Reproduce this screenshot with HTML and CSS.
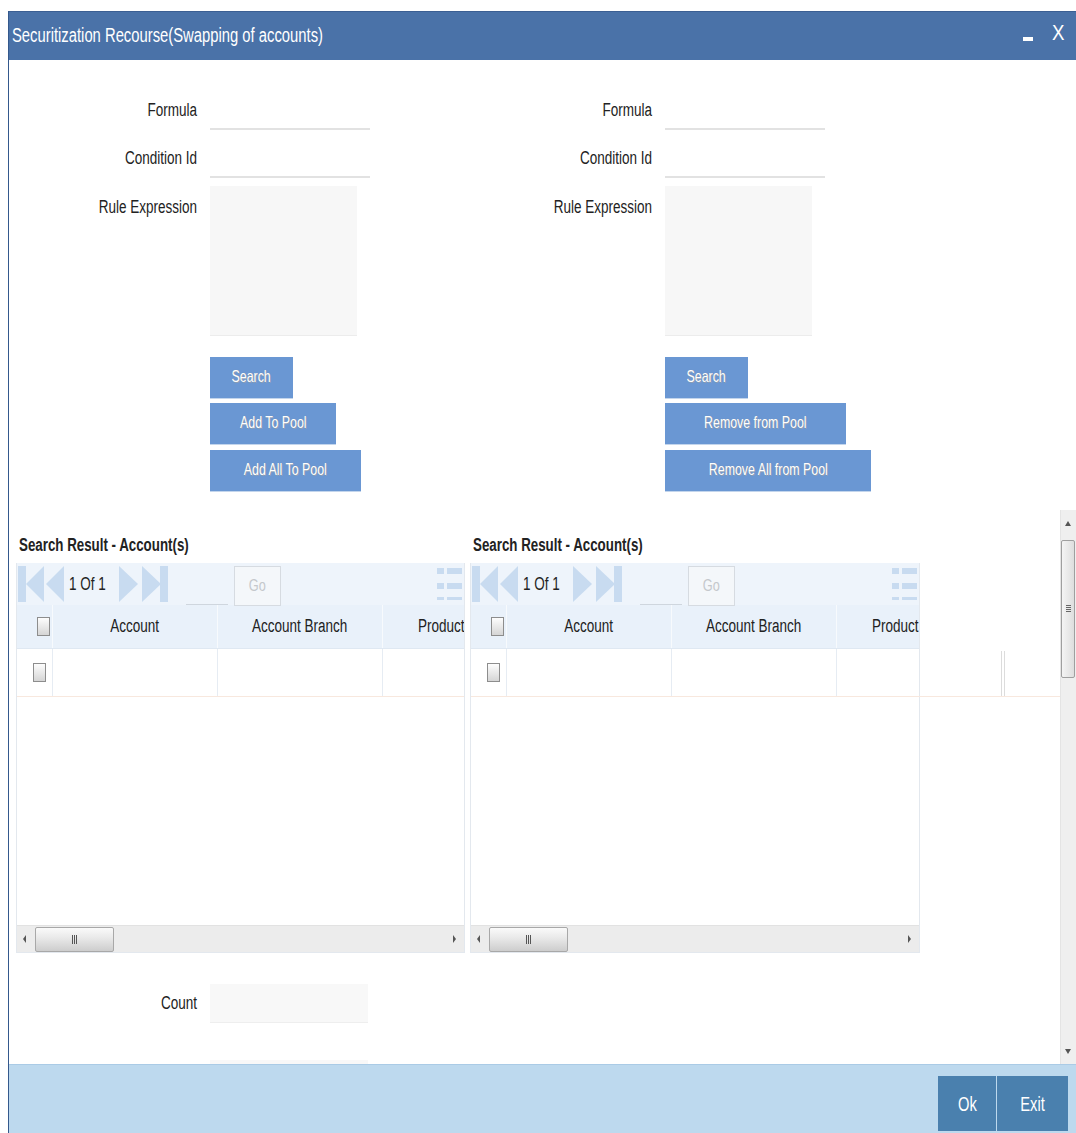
FILE: index.html
```html
<!DOCTYPE html>
<html>
<head>
<meta charset="utf-8">
<title>Securitization Recourse</title>
<link rel="stylesheet" href="styles.css">
</head>
<body>
<div class="window">
  <div class="titlebar">
    <span class="title"><span class="t">Securitization Recourse(Swapping of accounts)</span></span>
    <span class="win-ctl"><span class="win-min"></span><span class="win-close"><span class="t">X</span></span></span>
  </div>

  <div class="body">
    <div class="form-cols">
      <div class="col">
        <div class="field"><label class="lbl"><span class="t">Formula</span></label><span class="txt"></span></div>
        <div class="field"><label class="lbl"><span class="t">Condition Id</span></label><span class="txt"></span></div>
        <div class="field field-area"><label class="lbl"><span class="t">Rule Expression</span></label><span class="area"></span></div>
        <div class="btns">
          <button class="btn w-search"><span class="t">Search</span></button>
          <button class="btn w-add"><span class="t">Add To Pool</span></button>
          <button class="btn w-addall"><span class="t">Add All To Pool</span></button>
        </div>
      </div>
      <div class="col">
        <div class="field"><label class="lbl"><span class="t">Formula</span></label><span class="txt"></span></div>
        <div class="field"><label class="lbl"><span class="t">Condition Id</span></label><span class="txt"></span></div>
        <div class="field field-area"><label class="lbl"><span class="t">Rule Expression</span></label><span class="area"></span></div>
        <div class="btns">
          <button class="btn w-search"><span class="t">Search</span></button>
          <button class="btn w-rem"><span class="t">Remove from Pool</span></button>
          <button class="btn w-remall"><span class="t">Remove All from Pool</span></button>
        </div>
      </div>
    </div>

    <div class="results">
      <div class="result">
        <div class="result-title"><span class="t">Search Result - Account(s)</span></div>
        <div class="grid">
          <div class="toolbar">
            <span class="nav nav-first"></span><span class="nav nav-prev"></span>
            <span class="page"><span class="t">1 Of 1</span></span>
            <span class="nav nav-next"></span><span class="nav nav-last"></span>
            <span class="goto"></span>
            <span class="go"><span class="t">Go</span></span>
            <span class="cols-icon"><i></i><i></i><i></i></span>
          </div>
          <div class="thead">
            <span class="c c-chk"><span class="chk"></span></span>
            <span class="c c-acc"><span class="t">Account</span></span>
            <span class="c c-br"><span class="t">Account Branch</span></span>
            <span class="c c-prod"><span class="t">Product</span></span>
          </div>
          <div class="trow">
            <span class="c c-chk"><span class="chk"></span></span>
            <span class="c c-acc"></span>
            <span class="c c-br"></span>
            <span class="c c-prod"></span>
          </div>
          <div class="tbody-space"></div>
          <div class="hscroll">
            <span class="arr-l"></span>
            <span class="thumb"><span class="bars"></span></span>
            <span class="arr-r"></span>
          </div>
        </div>
      </div>
      <div class="result">
        <div class="result-title"><span class="t">Search Result - Account(s)</span></div>
        <div class="grid">
          <div class="toolbar">
            <span class="nav nav-first"></span><span class="nav nav-prev"></span>
            <span class="page"><span class="t">1 Of 1</span></span>
            <span class="nav nav-next"></span><span class="nav nav-last"></span>
            <span class="goto"></span>
            <span class="go"><span class="t">Go</span></span>
            <span class="cols-icon"><i></i><i></i><i></i></span>
          </div>
          <div class="thead">
            <span class="c c-chk"><span class="chk"></span></span>
            <span class="c c-acc"><span class="t">Account</span></span>
            <span class="c c-br"><span class="t">Account Branch</span></span>
            <span class="c c-prod"><span class="t">Product</span></span>
          </div>
          <div class="trow">
            <span class="c c-chk"><span class="chk"></span></span>
            <span class="c c-acc"></span>
            <span class="c c-br"></span>
            <span class="c c-prod"></span>
          </div>
          <div class="tbody-space"></div>
          <div class="hscroll">
            <span class="arr-l"></span>
            <span class="thumb"><span class="bars"></span></span>
            <span class="arr-r"></span>
          </div>
        </div>
        <span class="row-ext"></span>
      </div>
    </div>

    <div class="field count"><label class="lbl"><span class="t">Count</span></label><span class="box"></span></div>
    <div class="field count"><label class="lbl"></label><span class="box"></span></div>

    <div class="vscroll">
      <span class="v-up"></span>
      <span class="v-thumb"><span class="grip"></span></span>
      <span class="v-down"></span>
    </div>
  </div>

  <div class="footer">
    <button class="fbtn fbtn-ok"><span class="t">Ok</span></button>
    <button class="fbtn fbtn-exit"><span class="t">Exit</span></button>
  </div>
</div>
</body>
</html>
```

FILE: styles.css
```css
html, body {
  margin: 0;
  padding: 0;
  background: #fff;
  height: 100%;
  overflow: hidden;
}

body {
  font-family: "Liberation Sans", Arial, sans-serif;
  color: #222;
}

/* the UI uses a narrow face: text runs are condensed horizontally */
.t {
  display: inline-block;
  white-space: nowrap;
  transform: scaleX(0.75);
  transform-origin: center center;
}

.window {
  margin: 11px 0 0 8px;
  border-left: 1px solid #34588c;
  height: 1122px;
  display: flex;
  flex-direction: column;
  position: relative;
}

/* title bar */
.titlebar {
  height: 49px;
  background: #4a72a8;
  border-top: 1px solid #3b5f93;
  box-sizing: border-box;
  display: flex;
  align-items: center;
  justify-content: space-between;
  padding: 0 10px 2px 3px;
  color: #fff;
}
.title {
  font-size: 20px;
}
.title .t {
  transform-origin: left center;
  transform: scaleX(0.74);
}
.win-ctl {
  display: flex;
  align-items: center;
  gap: 18px;
}
.win-min {
  width: 10px;
  height: 4px;
  background: #fff;
  margin-top: 8px;
}
.win-close {
  font-size: 22px;
  margin-top: -5px;
}
.win-close .t {
  transform: scaleX(0.85);
}

/* scrolling body */
.body {
  height: 1004px;
  overflow: hidden;
  position: relative;
  padding-top: 30px;
  box-sizing: border-box;
}

.form-cols {
  display: flex;
}
.col {
  width: 455px;
}

.field {
  display: flex;
  align-items: flex-start;
  margin-bottom: 8px;
}
.lbl {
  width: 188px;
  margin-right: 13px;
  text-align: right;
  font-size: 18px;
  line-height: 40px;
  height: 40px;
  color: #222;
  flex: none;
}
.lbl .t {
  transform-origin: right center;
}
.txt {
  width: 160px;
  height: 40px;
  border-bottom: 2px solid #e2e2e2;
  box-sizing: border-box;
}
.field-area {
  margin-top: 1px;
}
.field-area .lbl {
  line-height: 42px;
}
.area {
  width: 147px;
  height: 150px;
  background: #f7f7f7;
  border-bottom: 1px solid #ececec;
  box-sizing: border-box;
}

.btns {
  margin: 21px 0 0 201px;
  display: flex;
  flex-direction: column;
  align-items: flex-start;
  gap: 5px;
}
.btns .btn:last-child {
  margin-top: 1px;
}
.btn {
  height: 41px;
  border: 0;
  background: #6a97d3;
  color: #fff;
  font-family: inherit;
  font-size: 16.5px;
  text-shadow: 0 0 1px #7d8ea4, 1px 1px 0 #8c9fb7;
  padding: 0 0 2px;
  box-shadow: 0 1px 0 #c3d5ec;
}
.w-search { width: 83px; }
.w-add { width: 126px; }
.w-addall { width: 151px; }
.w-rem { width: 181px; }
.w-remall { width: 206px; }

/* result grids */
.results {
  display: flex;
  gap: 5px;
  margin: 38px 0 0 7px;
  position: relative;
}
.result {
  width: 450px;
}
.result:first-child {
  width: 449px;
}
.result-title {
  font-size: 18px;
  font-weight: bold;
  line-height: 32px;
  height: 34px;
  padding-left: 3px;
  color: #222;
}
.result-title .t {
  transform-origin: left center;
  transform: scaleX(0.74);
}
.grid {
  border: 1px solid #e3e8ee;
  border-top: 0;
}

.toolbar {
  height: 42px;
  background: #eef4fb;
  display: flex;
  align-items: center;
  position: relative;
}
.nav {
  display: block;
  height: 36px;
  flex: none;
  position: relative;
}
.nav::after {
  content: "";
  position: absolute;
  top: 0;
  border-style: solid;
}
.nav-first {
  width: 26px;
  margin-left: 1px;
  background: linear-gradient(#c8dbf0, #c8dbf0) left / 8px 100% no-repeat;
}
.nav-first::after,
.nav-prev::after {
  right: 0;
  border-color: transparent #c8dbf0 transparent transparent;
  border-width: 18px 18px 18px 0;
}
.nav-prev {
  width: 20px;
}
.nav-next {
  width: 21px;
  margin-left: 5px;
}
.nav-last {
  width: 26px;
  margin-left: 2px;
  background: linear-gradient(#c8dbf0, #c8dbf0) right / 8px 100% no-repeat;
}
.nav-next::after,
.nav-last::after {
  left: 0;
  border-color: transparent transparent transparent #c8dbf0;
  border-width: 18px 0 18px 19px;
}
.page {
  width: 45px;
  flex: none;
  font-size: 18px;
  margin-left: 5px;
  color: #222;
}
.page .t {
  transform-origin: left center;
}
.goto {
  width: 42px;
  height: 40px;
  border-bottom: 1px solid #cfd6de;
  margin: 0 6px 0 18px;
  align-self: flex-end;
  box-sizing: border-box;
  flex: none;
}
.go {
  width: 47px;
  height: 40px;
  box-sizing: border-box;
  border: 1px solid #d6dbe1;
  background: #f4f7fa;
  color: #c4c8cc;
  font-size: 17px;
  display: flex;
  align-items: center;
  justify-content: center;
  margin-top: 4px;
  flex: none;
}
.cols-icon {
  margin-left: auto;
  margin-right: 2px;
  width: 25px;
  height: 32px;
  display: flex;
  flex-direction: column;
  justify-content: space-between;
}
.cols-icon i {
  display: block;
  height: 6px;
  background:
    linear-gradient(#c8dbf0, #c8dbf0) left / 7px 100% no-repeat,
    linear-gradient(#c8dbf0, #c8dbf0) right / 15px 100% no-repeat;
}
.cols-icon i:last-child {
  height: 3px;
}

.thead,
.trow {
  display: flex;
  overflow: hidden;
  white-space: nowrap;
}
.thead {
  height: 44px;
  background: #e9f1fa;
  border-bottom: 1px solid #dfe8f2;
  box-sizing: border-box;
}
.trow {
  height: 48px;
  border-bottom: 1px solid #f8e8de;
  box-sizing: border-box;
}
.c {
  flex: none;
  display: flex;
  align-items: center;
  justify-content: center;
  font-size: 18px;
  color: #222;
  box-sizing: border-box;
}
.thead .c {
  border-right: 1px solid #f7fafd;
}
.trow .c {
  border-right: 1px solid #e6ecf3;
}
.c-chk { width: 36px; justify-content: flex-start; }
.thead .c-chk { padding-left: 20px; }
.trow .c-chk { padding-left: 16px; }
.c-acc { width: 165px; }
.c-br { width: 165px; }
.c-prod {
  width: 90px;
  justify-content: flex-start;
  padding-left: 35px;
}
.c-prod .t {
  transform-origin: left center;
}

.chk {
  width: 13px;
  height: 19px;
  border: 1px solid #8d8d8d;
  background: linear-gradient(#fdfdfd, #d5d5d5);
  box-sizing: border-box;
  flex: none;
}

.tbody-space {
  height: 228px;
}

.hscroll {
  height: 27px;
  background: #ececec;
  border-top: 1px solid #e2e2e2;
  display: flex;
  align-items: center;
  position: relative;
  box-sizing: border-box;
}
.arr-l,
.arr-r {
  width: 0;
  height: 0;
  border-style: solid;
  flex: none;
}
.arr-l {
  border-width: 4px 3px 4px 0;
  border-color: transparent #555 transparent transparent;
  margin-left: 6px;
}
.arr-r {
  border-width: 4px 0 4px 3px;
  border-color: transparent transparent transparent #555;
  margin-left: auto;
  margin-right: 8px;
}
.thumb {
  width: 79px;
  height: 25px;
  box-sizing: border-box;
  margin-left: 9px;
  border: 1px solid #a8a8a8;
  border-radius: 2px;
  background: linear-gradient(#fafafa, #e8e8e8 45%, #cdcdcd);
  display: flex;
  align-items: center;
  justify-content: center;
}
.bars {
  width: 5px;
  height: 9px;
  background: repeating-linear-gradient(90deg, #555 0 1px, transparent 1px 2px);
}

/* the right grid's row outline continues past the grid */
.row-ext {
  position: absolute;
  left: 455px;
  top: 120px;
  width: 589px;
  height: 48px;
  border-bottom: 1px solid #f8e8de;
  box-sizing: border-box;
  pointer-events: none;
}
.row-ext::before {
  content: "";
  position: absolute;
  left: 530px;
  top: 2px;
  width: 2px;
  height: 45px;
  border-left: 1px solid #dcdcdc;
  border-right: 1px solid #dcdcdc;
}

.count {
  margin-top: 31px;
  margin-bottom: 0;
}
.count + .count {
  margin-top: 36px;
}
.box {
  width: 158px;
  height: 39px;
  background: #f8f8f8;
  border-bottom: 1px solid #eeeeee;
  box-sizing: border-box;
}
.count .lbl {
  line-height: 39px;
}

/* page scrollbar */
.vscroll {
  position: absolute;
  right: 0;
  top: 450px;
  bottom: 0;
  width: 15px;
  background: #efefef;
  border-left: 1px solid #e4e4e4;
}
.v-up,
.v-down {
  position: absolute;
  left: 4px;
  width: 0;
  height: 0;
  border-style: solid;
}
.v-up {
  top: 11px;
  border-width: 0 3.5px 5px 3.5px;
  border-color: transparent transparent #555 transparent;
}
.v-down {
  bottom: 10px;
  border-width: 5px 3.5px 0 3.5px;
  border-color: #555 transparent transparent transparent;
}
.v-thumb {
  position: absolute;
  left: 0;
  top: 30px;
  width: 14px;
  height: 138px;
  box-sizing: border-box;
  border: 1px solid #9f9f9f;
  border-radius: 2px;
  background: linear-gradient(90deg, #f4f4f4, #dedede);
}
.grip {
  position: absolute;
  left: 4px;
  top: 64px;
  width: 5px;
  height: 7px;
  background: repeating-linear-gradient(#666 0 1px, transparent 1px 2px);
}

/* footer */
.footer {
  flex: 1;
  background: #bdd9ee;
  display: flex;
  justify-content: flex-end;
  align-items: flex-start;
  padding: 11px 8px 0 0;
  gap: 1px;
  border-top: 1px solid #aacbe6;
}
.fbtn {
  height: 55px;
  border: 0;
  background: #4a80ae;
  color: #fff;
  font-family: inherit;
  font-size: 21px;
  padding: 0;
}
.fbtn .t {
  transform: scaleX(0.7);
}
.fbtn-ok { width: 58px; }
.fbtn-exit { width: 71px; }
```
